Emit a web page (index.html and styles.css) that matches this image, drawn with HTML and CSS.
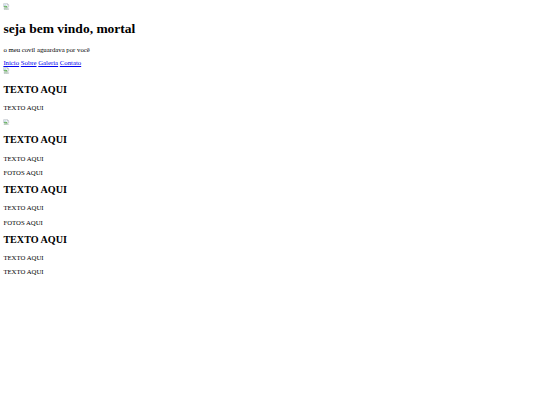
FILE: index.html
```html
<!DOCTYPE html>
<html lang="pt-BR">
<head>
<meta charset="utf-8">
<title>seja bem vindo, mortal</title>
<link rel="stylesheet" href="styles.css">
</head>
<body>
<svg class="broken" viewBox="0 0 16 16" aria-hidden="true"><path d="M1.5 1.5h9l3 3v5l-2 1.5-2-1.5-2 1.5-2-1.5-2 1.5-2-1.5z" fill="#f4f6f8" stroke="#9aa3ab"/><path d="M10.5 1.5v3h3" fill="#dfe3e7" stroke="#9aa3ab"/><path d="M2 9l2.5-3 2 2 1.5-1.5 3 3-2 1.5-2-1.5-2 1.5-2-1.5z" fill="#5fae55"/><circle cx="5" cy="4.5" r="1.2" fill="#6aa7e0"/><path d="M2.5 12.5l2 1.5 2-1.5 2 1.5 2-1.5 2 1.5 1-.8v1.8h-11z" fill="#eef1f4" stroke="#9aa3ab"/><path d="M3 14.5l2-1 2 1 2-1 2 1" fill="none" stroke="#5fae55" stroke-width=".8"/></svg>
<h1>seja bem vindo, mortal</h1>
<p class="tagline">o meu covil aguardava por você</p>
<nav class="menu"><a href="#">Início</a> <a href="#">Sobre</a> <a href="#">Galeria</a> <a href="#">Contato</a></nav>
<svg class="broken" viewBox="0 0 16 16" aria-hidden="true"><path d="M1.5 1.5h9l3 3v5l-2 1.5-2-1.5-2 1.5-2-1.5-2 1.5-2-1.5z" fill="#f4f6f8" stroke="#9aa3ab"/><path d="M10.5 1.5v3h3" fill="#dfe3e7" stroke="#9aa3ab"/><path d="M2 9l2.5-3 2 2 1.5-1.5 3 3-2 1.5-2-1.5-2 1.5-2-1.5z" fill="#5fae55"/><circle cx="5" cy="4.5" r="1.2" fill="#6aa7e0"/><path d="M2.5 12.5l2 1.5 2-1.5 2 1.5 2-1.5 2 1.5 1-.8v1.8h-11z" fill="#eef1f4" stroke="#9aa3ab"/><path d="M3 14.5l2-1 2 1 2-1 2 1" fill="none" stroke="#5fae55" stroke-width=".8"/></svg>
<h2 class="first">TEXTO AQUI</h2>
<p>TEXTO AQUI</p>
<svg class="broken" viewBox="0 0 16 16" aria-hidden="true"><path d="M1.5 1.5h9l3 3v5l-2 1.5-2-1.5-2 1.5-2-1.5-2 1.5-2-1.5z" fill="#f4f6f8" stroke="#9aa3ab"/><path d="M10.5 1.5v3h3" fill="#dfe3e7" stroke="#9aa3ab"/><path d="M2 9l2.5-3 2 2 1.5-1.5 3 3-2 1.5-2-1.5-2 1.5-2-1.5z" fill="#5fae55"/><circle cx="5" cy="4.5" r="1.2" fill="#6aa7e0"/><path d="M2.5 12.5l2 1.5 2-1.5 2 1.5 2-1.5 2 1.5 1-.8v1.8h-11z" fill="#eef1f4" stroke="#9aa3ab"/><path d="M3 14.5l2-1 2 1 2-1 2 1" fill="none" stroke="#5fae55" stroke-width=".8"/></svg>
<h2>TEXTO AQUI</h2>
<p>TEXTO AQUI</p>
<p>FOTOS AQUI</p>
<h2>TEXTO AQUI</h2>
<p>TEXTO AQUI</p>
<p>FOTOS AQUI</p>
<h2>TEXTO AQUI</h2>
<p>TEXTO AQUI</p>
<p>TEXTO AQUI</p>
</body>
</html>
```
FILE: styles.css
```css
html {
  background: #fff;
}
body {
  margin: 3.375px;
  font-family: "Liberation Serif", "Times New Roman", serif;
  font-size: 6.75px;
  line-height: 7.8px;
  color: #000;
}
h1 {
  font-size: 13.5px;
  line-height: 15.5px;
  font-weight: bold;
  margin: 9.25px 0 9px;
}
h2 {
  font-size: 10.125px;
  line-height: 11.6px;
  font-weight: bold;
  margin: 7.2px 0 8.8px;
}
h2.first {
  margin-top: 8.3px;
}
p {
  margin: 6.5px 0;
}
p.tagline {
  margin-bottom: 5.8px;
}
.menu {
  display: block;
  line-height: 7.8px;
}
a {
  color: #0000ee;
  text-decoration: underline;
}
.broken {
  display: inline;
  width: 6.75px;
  height: 6.75px;
  vertical-align: baseline;
}
```
